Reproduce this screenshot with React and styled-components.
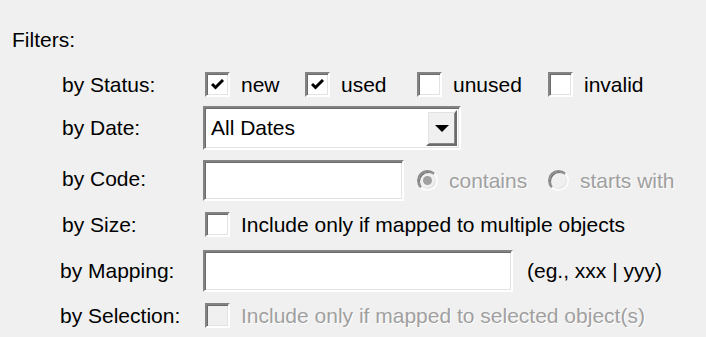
import React from "react";
import styled, { createGlobalStyle } from "styled-components";

const GlobalStyle = createGlobalStyle`
  body {
    margin: 0;
    background: #f0f0f0;
    font-family: "Liberation Sans", Arial, sans-serif;
  }
`;

const Panel = styled.div`
  width: 706px;
  height: 337px;
  box-sizing: border-box;
  padding: 28px 0 0 12px;
  background: #f0f0f0;
  color: #000;
  font-size: 21px;
  overflow: hidden;
`;

const Title = styled.div`
  line-height: 24px;
  height: 24px;
`;

const Lines = styled.div`
  display: flex;
  flex-direction: column;
  margin: 20px 0 0 50px;
`;

const Line = styled.div`
  display: flex;
  align-items: center;
  margin-top: ${(p) => p.$mt || 0}px;
`;

const Label = styled.div`
  width: 141px;
  flex: none;
  line-height: 24px;
  margin-left: ${(p) => p.$shift || 0}px;
  padding-right: ${(p) => -(p.$shift || 0)}px;
  position: relative;
  top: ${(p) => p.$dy || 0}px;
`;

const Option = styled.label`
  display: flex;
  align-items: center;
  width: ${(p) => (p.$w ? `${p.$w}px` : "auto")};
  margin-left: ${(p) => p.$ml || 0}px;
  gap: 11px;
  color: ${(p) => (p.$disabled ? "#a0a0a0" : "#000")};
  text-shadow: ${(p) => (p.$disabled ? "1px 1px 0 #fff" : "none")};
  white-space: nowrap;
`;

const Box = styled.span`
  display: inline-flex;
  align-items: center;
  justify-content: center;
  width: 25px;
  height: 25px;
  box-sizing: border-box;
  border-style: solid;
  border-width: 2px;
  border-color: #838383 #ffffff #ffffff #838383;
  box-shadow: inset 1px 1px 0 #6b6b6b, inset -1px -1px 0 #e3e3e3;
  background: ${(p) => (p.$disabled ? "#f0f0f0" : "#fff")};
  flex: none;
`;

const Radio = styled.span`
  position: relative;
  display: inline-block;
  width: 21px;
  height: 21px;
  border-radius: 50%;
  box-sizing: border-box;
  border: 2px solid;
  border-color: #8a8a8a #fbfbfb #fbfbfb #8a8a8a;
  box-shadow: inset 1px 1px 0 #6e6e6e, inset -1px -1px 0 #e0e0e0;
  background: #f0f0f0;
  flex: none;

  &::after {
    content: "";
    display: ${(p) => (p.$on ? "block" : "none")};
    position: absolute;
    left: 4px;
    top: 4px;
    width: 9px;
    height: 9px;
    border-radius: 50%;
    background: #a0a0a0;
  }
`;

const Field = styled.div`
  display: flex;
  align-items: stretch;
  width: ${(p) => p.$w}px;
  height: ${(p) => p.$h}px;
  box-sizing: border-box;
  border-style: solid;
  border-width: 2px;
  border-color: #838383 #ffffff #ffffff #838383;
  box-shadow: inset 1px 1px 0 #6b6b6b, inset -1px -1px 0 #e3e3e3;
  background: #fff;
  flex: none;
`;

const SelectText = styled.span`
  flex: 1;
  padding: 0 0 0 6px;
  display: flex;
  align-items: center;
`;

const DropButton = styled.span`
  width: 31px;
  margin: 2px 2px 2px 0;
  box-sizing: border-box;
  border-style: solid;
  border-width: 2px;
  border-color: #ffffff #6b6b6b #6b6b6b #ffffff;
  box-shadow: inset 1px 1px 0 #e3e3e3, inset -1px -1px 0 #8a8a8a;
  background: #f0f0f0;
  display: flex;
  align-items: center;
  justify-content: center;
`;

const Arrow = styled.span`
  width: 0;
  height: 0;
  border-left: 7px solid transparent;
  border-right: 7px solid transparent;
  border-top: 7px solid #000;
`;

const Hint = styled.span`
  margin-left: 14px;
  white-space: nowrap;
`;

const Check = () => (
  <svg width="13" height="11" viewBox="0 0 13 11">
    <path d="M1 5 L4.5 8.5 L12 1" fill="none" stroke="#000" strokeWidth="3" />
  </svg>
);

const CheckOption = ({ label, checked, w, disabled, ml }) => (
  <Option $w={w} $disabled={disabled} $ml={ml}>
    <Box $disabled={disabled}>{checked && <Check />}</Box>
    <span>{label}</span>
  </Option>
);

export default function App() {
  return (
    <>
      <GlobalStyle />
      <Panel>
        <Title>Filters:</Title>
        <Lines>
          <Line>
            <Label>by Status:</Label>
            <CheckOption label="new" checked w={100} ml={2} />
            <CheckOption label="used" checked w={112} />
            <CheckOption label="unused" w={131} />
            <CheckOption label="invalid" />
          </Line>

          <Line $mt={9}>
            <Label>by Date:</Label>
            <Field $w={258} $h={44}>
              <SelectText>All Dates</SelectText>
              <DropButton>
                <Arrow />
              </DropButton>
            </Field>
          </Line>

          <Line $mt={10}>
            <Label $dy={-2}>by Code:</Label>
            <Field $w={201} $h={41} />
            <Option $w={131} $ml={13} $disabled>
              <Radio $on />
              <span>contains</span>
            </Option>
            <Option $disabled>
              <Radio />
              <span>starts with</span>
            </Option>
          </Line>

          <Line $mt={11}>
            <Label>by Size:</Label>
            <CheckOption label="Include only if mapped to multiple objects" ml={2} />
          </Line>

          <Line $mt={13}>
            <Label $shift={-2}>by Mapping:</Label>
            <Field $w={310} $h={42} />
            <Hint>(eg., xxx | yyy)</Hint>
          </Line>

          <Line $mt={11}>
            <Label $shift={-2}>by Selection:</Label>
            <CheckOption
              label="Include only if mapped to selected object(s)"
              ml={2}
              disabled
            />
          </Line>
        </Lines>
      </Panel>
    </>
  );
}
